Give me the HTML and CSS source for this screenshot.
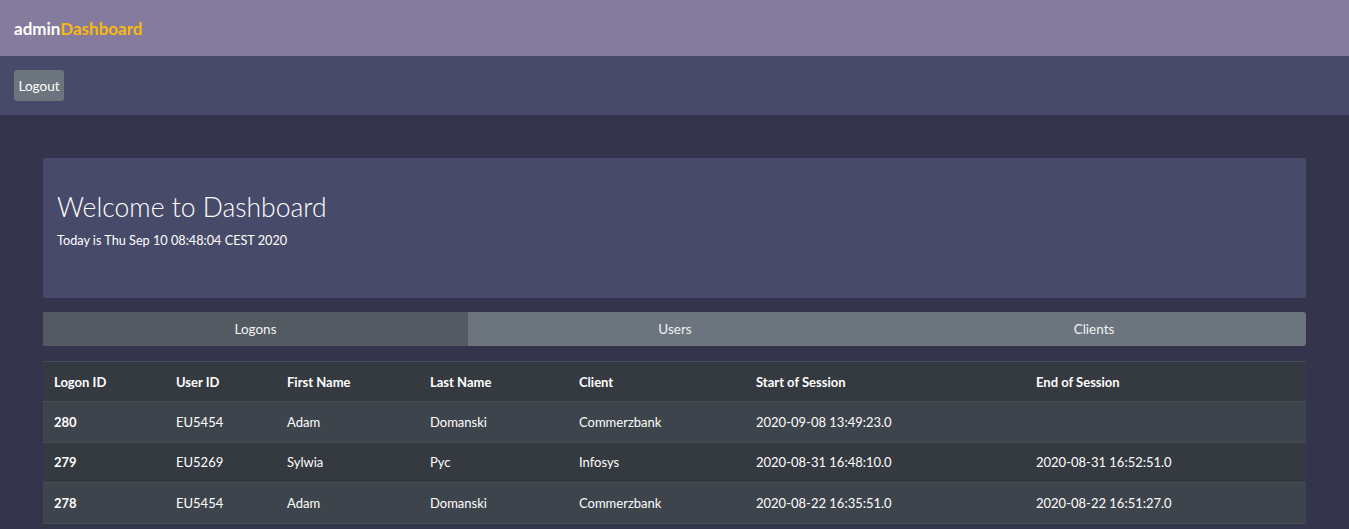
FILE: index.html
```html
<!DOCTYPE html>
<html>
<head>
<meta charset="utf-8">
<link rel="stylesheet" href="styles.css">
</head>
<body>
<header class="brandbar">
  <span class="brand"><span class="brand-a">admin</span><span class="brand-b">Dashboard</span></span>
</header>
<nav class="actionbar">
  <button class="btn-logout">Logout</button>
</nav>
<main class="container">
  <section class="jumbo">
    <h1 class="jumbo-title">Welcome to Dashboard</h1>
    <p class="jumbo-date">Today is Thu Sep 10 08:48:04 CEST 2020</p>
  </section>
  <div class="tabs">
    <div class="tab active">Logons</div>
    <div class="tab">Users</div>
    <div class="tab">Clients</div>
  </div>
  <table class="grid">
    <colgroup>
      <col class="c1"><col class="c2"><col class="c3"><col class="c4"><col class="c5"><col class="c6"><col class="c7">
    </colgroup>
    <thead>
      <tr><th>Logon ID</th><th>User ID</th><th>First Name</th><th>Last Name</th><th>Client</th><th>Start of Session</th><th>End of Session</th></tr>
    </thead>
    <tbody>
      <tr class="odd"><th>280</th><td>EU5454</td><td>Adam</td><td>Domanski</td><td>Commerzbank</td><td>2020-09-08 13:49:23.0</td><td></td></tr>
      <tr><th>279</th><td>EU5269</td><td>Sylwia</td><td>Pyc</td><td>Infosys</td><td>2020-08-31 16:48:10.0</td><td>2020-08-31 16:52:51.0</td></tr>
      <tr class="odd"><th>278</th><td>EU5454</td><td>Adam</td><td>Domanski</td><td>Commerzbank</td><td>2020-08-22 16:35:51.0</td><td>2020-08-22 16:51:27.0</td></tr>
    </tbody>
  </table>
</main>
</body>
</html>
```

FILE: styles.css
```css
* { box-sizing: border-box; }
html, body { margin: 0; padding: 0; }
body {
  background: #34344d;
  font-family: Lato, "Open Sans", sans-serif;
  font-size: 13.5px;
  color: #fff;
}
.brandbar {
  height: 56px;
  background: #857b9c;
  display: flex;
  align-items: center;
  padding: 0 14px;
}
.brand { font-weight: 700; font-size: 17px; letter-spacing: 0; }
.brand-a { color: #fff; }
.brand-b { color: #f7b90f; }
.actionbar {
  height: 59px;
  background: #484a69;
  display: flex;
  align-items: center;
  padding: 0 14px;
}
.btn-logout {
  background: #6c757d;
  color: #fff;
  border: none;
  border-radius: 3px;
  font-family: inherit;
  font-size: 13.5px;
  height: 31px;
  width: 50px;
  padding: 0;
}
.container {
  margin: 43px 43px 0;
}
.jumbo {
  background: #484a69;
  height: 140px;
  border-radius: 2px;
  padding: 33px 14px 0;
}
.jumbo-title {
  margin: 0;
  font-weight: 300;
  font-size: 26.5px;
  line-height: 32px;
  color: #fff;
}
.jumbo-date {
  margin: 9px 0 0;
  font-size: 12.7px;
}
.tabs {
  margin-top: 14px;
  display: grid;
  grid-template-columns: 425px 414px 1fr;
  height: 34px;
  border-radius: 3px;
  overflow: hidden;
  background: #6c757d;
}
.tab {
  display: flex;
  align-items: center;
  justify-content: center;
  font-size: 13.5px;
  color: #f2f2f2;
}
.tab.active { background: #535a62; }
.grid {
  margin-top: 15px;
  width: 100%;
  border-collapse: collapse;
  table-layout: fixed;
}
.c1 { width: 122px; }
.c2 { width: 111px; }
.c3 { width: 143px; }
.c4 { width: 149px; }
.c5 { width: 177px; }
.c6 { width: 280px; }
.grid th, .grid td {
  text-align: left;
  padding: 0 11px;
  height: 40.5px;
  border-top: 1px solid #454d55;
  border-bottom: 1px solid #454d55;
  font-size: 13px;
  white-space: nowrap;
}
.grid th { font-weight: 700; }
.grid td { font-weight: 400; }
.grid thead th { background: #343a40; height: 40px; }
.grid tbody tr { background: #343a40; }
.grid tbody tr.odd { background: #3e444b; }
```
